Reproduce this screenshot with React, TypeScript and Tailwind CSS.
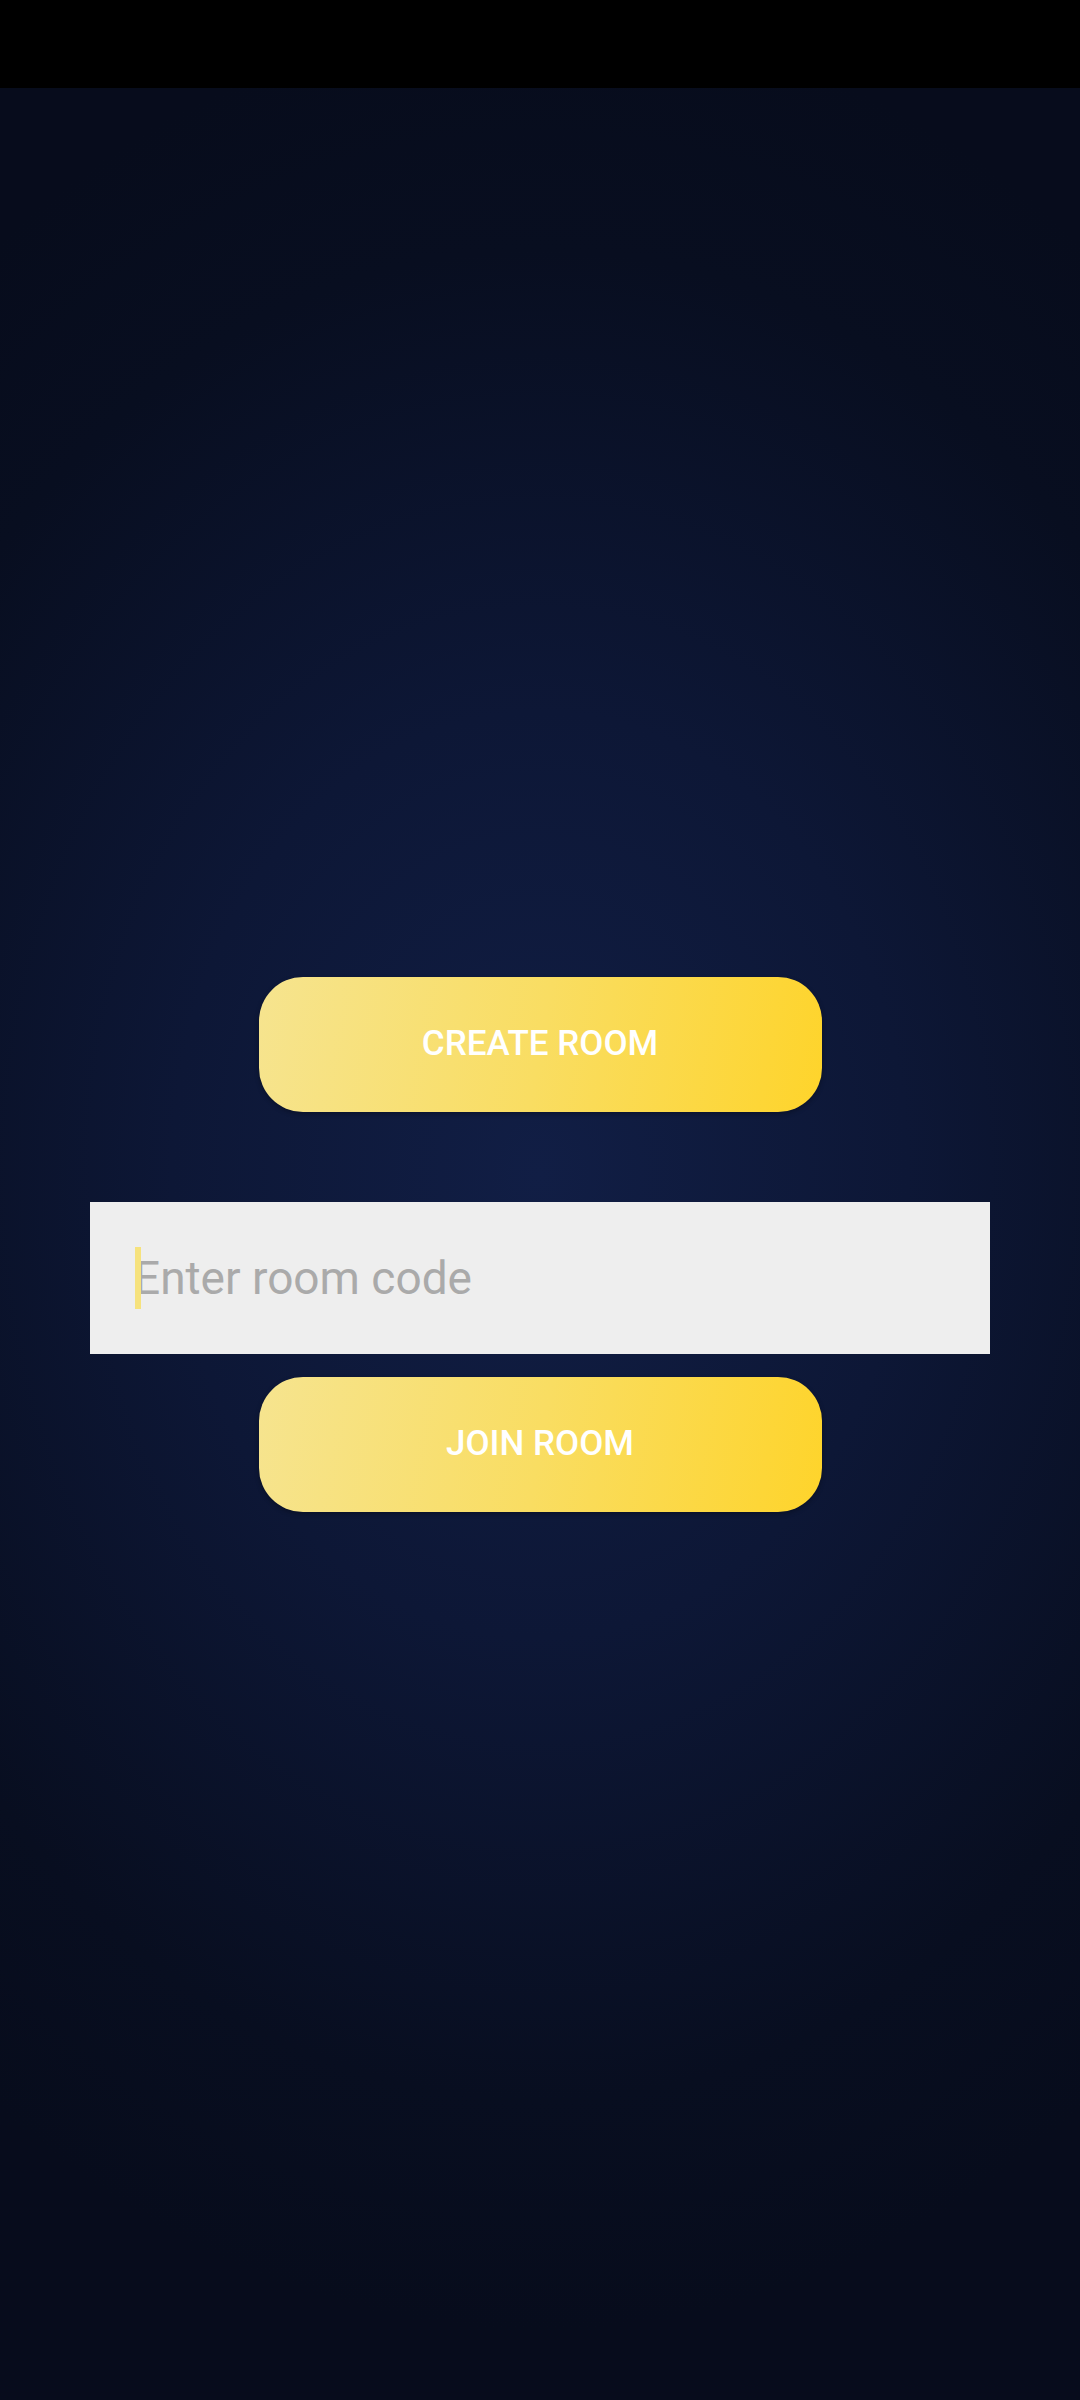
import React from "react";

export default function App() {
  return (
    <div className="w-[1080px] h-[2400px] flex flex-col font-['Roboto',_'Liberation_Sans',_sans-serif]">
      <div className="h-[88px] bg-black shrink-0" />
      <div className="flex-1 flex flex-col items-center justify-center bg-[radial-gradient(ellipse_85%_50%_at_50%_47%,#111e45_0%,#0d1736_40%,#080e20_80%,#070c1c_100%)]">
        <button className="w-[563px] h-[135px] rounded-[44px] bg-[linear-gradient(100deg,#f6e48f_0%,#f9dd62_50%,#fed42b_100%)] text-white text-[35px] font-medium shadow-[0_2px_5px_rgba(0,0,0,0.3)]">
          CREATE ROOM
        </button>
        <div className="relative mt-[90px] w-[900px] h-[152px] bg-[#eeeeee] flex items-center pl-[44px]">
          <span className="text-[46px] text-[#aaaaaa] leading-none">Enter room code</span>
          <span className="absolute left-[45px] top-[45px] w-[6px] h-[62px] bg-[#f6e27d]" />
        </div>
        <button className="mt-[23px] w-[563px] h-[135px] rounded-[44px] bg-[linear-gradient(100deg,#f6e48f_0%,#f9dd62_50%,#fed42b_100%)] text-white text-[35px] font-medium shadow-[0_2px_5px_rgba(0,0,0,0.3)]">
          JOIN ROOM
        </button>
      </div>
    </div>
  );
}
